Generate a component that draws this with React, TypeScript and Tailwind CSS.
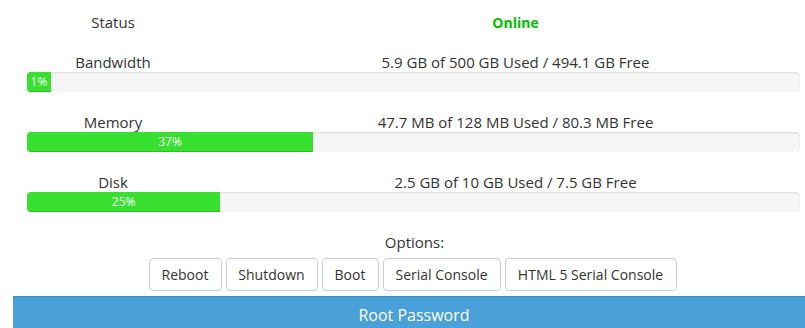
import React from "react";

const font = { fontFamily: '"Open Sans", "Liberation Sans", sans-serif' };

function Bar({ pct }: { pct: number }) {
  return (
    <div className="ml-[27px] mr-[5px] h-[20px] rounded-[4px] bg-[#f5f5f5] shadow-[inset_0_1px_2px_rgba(0,0,0,0.1)] overflow-hidden flex">
      <div
        className="h-full bg-[#38e02f] text-white text-[12px] leading-[20px] text-center min-w-[24px] shadow-[inset_0_-1px_0_rgba(0,0,0,0.15)]"
        style={{ width: `${pct}%` }}
      >
        {pct}%
      </div>
    </div>
  );
}

function Row({ label, value, bold }: { label: string; value: string; bold?: boolean }) {
  return (
    <div className="flex h-[20px] leading-[20px] text-[15px] text-[#333]">
      <div className="w-[226px] text-center">{label}</div>
      <div className={"flex-1 text-center " + (bold ? "font-bold text-[14px] text-[#00c000] pt-[1px]" : "")}>{value}</div>
    </div>
  );
}

export default function App() {
  const buttons: [string, string][] = [
    ["Reboot", "w-[73px]"],
    ["Shutdown", "w-[92px]"],
    ["Boot", "w-[57px]"],
    ["Serial Console", "w-[118px]"],
    ["HTML 5 Serial Console", "w-[172px]"],
  ];
  return (
    <div className="w-[805px] h-[328px] bg-white overflow-hidden pt-[12px]" style={font}>
      <Row label="Status" value="Online" bold />
      <div className="mt-[20px]">
        <Row label="Bandwidth" value="5.9 GB of 500 GB Used / 494.1 GB Free" />
        <Bar pct={1} />
      </div>
      <div className="mt-[20px]">
        <Row label="Memory" value="47.7 MB of 128 MB Used / 80.3 MB Free" />
        <Bar pct={37} />
      </div>
      <div className="mt-[20px]">
        <Row label="Disk" value="2.5 GB of 10 GB Used / 7.5 GB Free" />
        <Bar pct={25} />
      </div>
      <div className="mt-[20px] text-center text-[15px] leading-[20px] text-[#333] pl-[24px]">Options:</div>
      <div className="mt-[6px] flex justify-center gap-[4px] pl-[20px]">
        {buttons.map(([b, w]) => (
          <button
            key={b}
            className={"h-[33px] " + w + " border border-[#ccc] rounded-[4px] bg-white text-[14px] text-[#333] text-center"}
            style={font}
          >
            {b}
          </button>
        ))}
      </div>
      <div className="mt-[5px] ml-[13px] h-[40px] bg-[#4aa0d8] border-t border-[#3d8cc4] text-white text-[16px] leading-[36px] text-center pl-[10px]">
        Root Password
      </div>
    </div>
  );
}
